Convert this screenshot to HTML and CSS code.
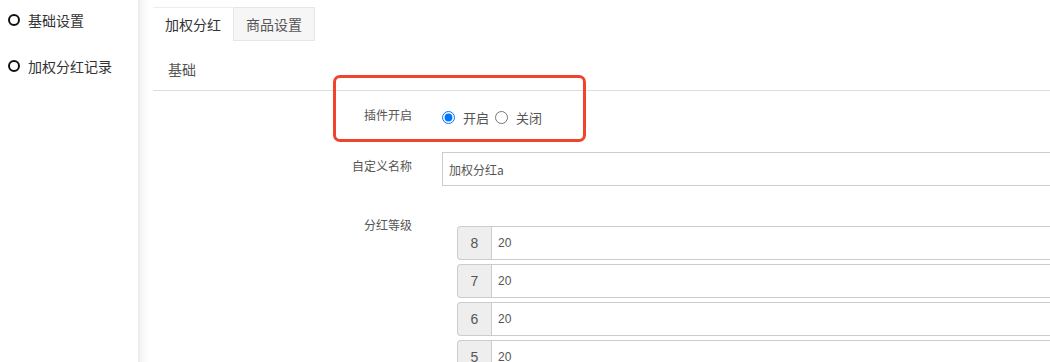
FILE: index.html
```html
<!DOCTYPE html>
<html lang="zh">
<head>
<meta charset="utf-8">
<link rel="stylesheet" href="styles.css">
</head>
<body>
<div class="page">
  <aside class="sidebar">
    <div class="side-item"><span class="dot"></span><span>基础设置</span></div>
    <div class="side-item"><span class="dot"></span><span>加权分红记录</span></div>
  </aside>
  <main class="main">
    <div class="tabs">
      <div class="tab active">加权分红</div>
      <div class="tab">商品设置</div>
    </div>
    <div class="section-title">基础</div>
    <form class="form">
      <div class="row row-switch">
        <label class="label">插件开启</label>
        <div class="control radios">
          <label class="radio"><input type="radio" name="on" checked><span>开启</span></label>
          <label class="radio"><input type="radio" name="on"><span>关闭</span></label>
        </div>
        <div class="highlight"></div>
      </div>
      <div class="row row-name">
        <label class="label">自定义名称</label>
        <div class="control">
          <input class="text-input" type="text" value="加权分红a">
        </div>
      </div>
      <div class="row row-levels">
        <label class="label">分红等级</label>
        <div class="control levels">
          <div class="group"><span class="addon">8</span><input class="group-input" type="text" value="20"></div>
          <div class="group"><span class="addon">7</span><input class="group-input" type="text" value="20"></div>
          <div class="group"><span class="addon">6</span><input class="group-input" type="text" value="20"></div>
          <div class="group"><span class="addon">5</span><input class="group-input" type="text" value="20"></div>
        </div>
      </div>
    </form>
  </main>
</div>
</body>
</html>
```
FILE: styles.css
```css
* { box-sizing: border-box; }
html, body { margin: 0; padding: 0; background: #fff; }
body {
  width: 1050px;
  height: 362px;
  overflow: hidden;
  font-family: "Noto Sans CJK SC", "Liberation Sans", sans-serif;
  color: #333;
}
.page { display: flex; height: 362px; overflow: hidden; }
.sidebar {
  width: 138px;
  flex: none;
  padding-top: 10px;
}
.side-item {
  display: flex;
  align-items: center;
  height: 20px;
  margin-bottom: 26px;
  padding-left: 8px;
  font-size: 14px;
  color: #333;
}
.dot {
  width: 12px;
  height: 12px;
  border: 2px solid #111;
  border-radius: 50%;
  margin-right: 8px;
  flex: none;
}
.main {
  flex: 1;
  min-width: 0;
  overflow: hidden;
  padding-left: 15px;
  background: linear-gradient(to right, #ebebeb 0, #f6f6f6 4px, #fff 10px);
}
.tabs {
  display: flex;
  margin-top: 7px;
  height: 34px;
}
.tab {
  height: 34px;
  display: flex;
  align-items: center;
  justify-content: center;
  font-size: 14px;
  color: #555;
  border: 1px solid #e6e6e6;
  background: #f6f6f6;
}
.tab.active {
  width: 80px;
  background: #fff;
  color: #333;
  border-color: #ececec transparent transparent transparent;
}
.tab:not(.active) { width: 82px; }
.section-title {
  height: 50px;
  border-bottom: 1px solid #dedede;
  font-size: 14px;
  color: #555;
  padding: 18px 0 0 15px;
  line-height: 20px;
}
.form { padding-top: 9px; }
.row {
  display: flex;
  position: relative;
}
.label {
  width: 259px;
  flex: none;
  text-align: right;
  font-size: 12px;
  color: #555;
  line-height: 18px;
}
.control {
  margin-left: 30px;
  flex: none;
}
.row-switch { height: 34px; }
.row-switch .label { padding-top: 6px; }
.radios { display: flex; align-items: center; height: 34px; }
.radio {
  display: flex;
  align-items: center;
  font-size: 13px;
  color: #555;
}
.radio input {
  width: 13px;
  height: 13px;
  margin: 0 8px 0 0;
}
.radio + .radio { margin-left: 6px; }
.highlight {
  position: absolute;
  left: 180px;
  top: -25px;
  width: 253px;
  height: 67px;
  border: 3px solid #f1432b;
  border-radius: 7px;
  pointer-events: none;
}
.row-name { margin-top: 18px; }
.row-name .label { padding-top: 5px; }
.text-input {
  width: 610px;
  height: 34px;
  border: 1px solid #ccc;
  padding: 0 6px;
  font-family: "Noto Sans CJK SC", "Liberation Sans", sans-serif;
  font-size: 12px;
  color: #555;
  outline: none;
  background: #fff;
}
.row-levels { margin-top: 30px; }
.levels {
  margin-left: 45px;
  padding-top: 10px;
  display: flex;
  flex-direction: column;
  gap: 4px;
}
.group { display: flex; height: 34px; }
.addon {
  width: 34px;
  height: 34px;
  flex: none;
  display: flex;
  align-items: center;
  justify-content: center;
  background: #eee;
  border: 1px solid #ccc;
  border-right: 0;
  border-radius: 4px 0 0 4px;
  font-family: "Liberation Sans", Arial, sans-serif;
  font-size: 14px;
  color: #555;
}
.group-input {
  width: 570px;
  height: 34px;
  border: 1px solid #ccc;
  padding: 0 6px;
  font-family: "Liberation Sans", Arial, sans-serif;
  font-size: 12px;
  color: #555;
  outline: none;
  background: #fff;
}
```
